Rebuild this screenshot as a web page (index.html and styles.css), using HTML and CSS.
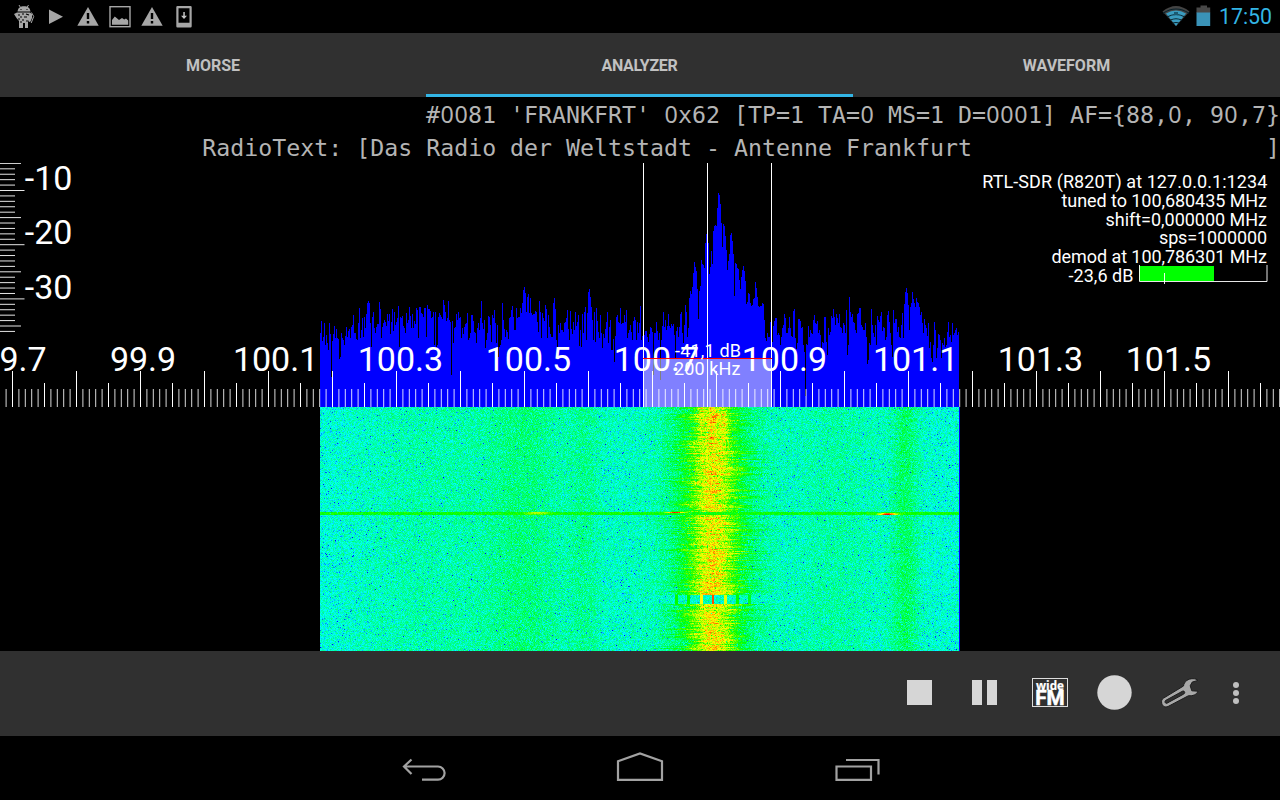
FILE: index.html
```html
<!DOCTYPE html>
<html lang="en">
<head>
<meta charset="utf-8">
<title>Analyzer</title>
<link rel="stylesheet" href="styles.css">
</head>
<body>
<div class="screen">
  <header class="status">
    <svg class="status-left" width="200" height="33" viewBox="0 0 200 33">
      <g fill="#a6a6a6">
        <path d="M17.500 11.500c.6-4 3-5.300 6.500-5.300s6 1.300 6.500 5.300zM14 14l3-1.500h13l2 1.500v4l-1.500 3.500-1.500.500-1-2v8h-3v-5h-2v5h-4v-7l-2.500-3z"/>
        <path d="M49 9.500v14.500l14-7.250z"/>
      </g>
      <path d="M19 5l1.500 2.500M28.500 5l-1.500 2.500M31.500 12.500l2.200 4-2.500 6.500" stroke="#a6a6a6" fill="none"/>
      <path d="M18 15h2M22 14h2M20 17h2M24 17h3M18 19h2M22 20h2M26 14l3 1M20.500 9.500h1M26.500 9.500h1M20 22h2M26 21h2" stroke="#000" stroke-width="1.200"/>
      <g id="warn">
        <path fill="#a6a6a6" d="M88 7l10.700 18.800H77.300z"/>
        <path stroke="#000" stroke-width="2.400" d="M88 13v6M88 21v2.500"/>
      </g>
      <use href="#warn" x="64"/>
      <rect x="110" y="6.700" width="20" height="20" fill="none" stroke="#a6a6a6" stroke-width="1.400"/>
      <path fill="#a6a6a6" d="M112 24.800v-4.800l2.800-3.500 4.200 3.500 3-2 2.200 1.500 1.800-1 2.200 2v4.300z"/>
      <path fill="#a6a6a6" fill-rule="evenodd" d="M177.500 6h13a1.200 1.200 0 0 1 1.200 1.200v19a1.200 1.200 0 0 1-1.200 1.200h-13a1.200 1.200 0 0 1-1.200-1.200v-19A1.200 1.200 0 0 1 177.500 6zM178.500 8.300v14.400h11V8.300z"/>
      <path fill="#c4c4c4" d="M183.300 12h1.500v3.800h2.200l-3 3.200-3-3.200h2.300z"/>
    </svg>
    <div class="status-right">
      <svg width="52" height="33" viewBox="1159.500 0 52 33">
        <path fill="#444" d="M1162 11.500q13.500-11 27 0l-13.500 14.500z"/>
        <path fill="#3a9cc0" d="M1165.500 13.500q10-6 20 0L1175.500 26z"/>
        <path fill="none" stroke="#08222c" stroke-width="1.100" d="M1162.500 13.300q13-8.500 26 0M1166.500 17q9-5 18 0M1169.500 20.300q6-3 12 0M1172 23.300q3.500-1.500 7 0"/>
        <path fill="#1b5a72" d="M1173.500 12h4v3.200h-4z"/>
        <path fill="#484848" d="M1196 7.500h4v-2h6.500v2h3.200V13H1196z"/>
        <path fill="#3a93b8" d="M1196 12.500h13.700V26H1196z"/>
      </svg>
      <span class="clock">17:50</span>
    </div>
  </header>

  <nav class="tabs">
    <div class="tab">MORSE</div>
    <div class="tab tab-active">ANALYZER</div>
    <div class="tab">WAVEFORM</div>
  </nav>

  <section class="rds">
    <div class="rds-line">#<b>0</b><b>0</b>81 'FRANKFRT' <b>0</b>x62 [TP=1 TA=<b>0</b> MS=1 D=<b>0</b><b>0</b><b>0</b>1] AF={88,<b>0</b>, 9<b>0</b>,7}</div>
    <div class="rds-line">RadioText: [Das Radio der Weltstadt - Antenne Frankfurt                     ]</div>
  </section>

  <svg class="spectrum" width="1280" height="244" viewBox="0 163 1280 244">
    <path id="trace" fill="#00f" shape-rendering="crispEdges"/>
    <rect x="643" y="359" width="129" height="48" fill="#fff" fill-opacity=".5"/>
    <g id="scale" stroke="#fff"></g>
    <g id="labels" class="big"></g>
    <path stroke="#fff" d="M643.500 163v244M707.500 163v244M771.500 163v244"/>
    <path stroke="#f00" d="M643 358.500h129"/>
    <g class="small">
      <text x="675" y="357" textLength="66">-41,1 dB</text>
      <text x="674" y="375" textLength="66.500">200 kHz</text>
      <g text-anchor="end">
        <text x="1267.300" y="187.700" textLength="285">RTL-SDR (R820T) at 127.0.0.1:1234</text>
        <text x="1267" y="206.700" textLength="205.500">tuned to 100,680435 MHz</text>
        <text x="1267" y="225.700" textLength="161.500">shift=0,000000 MHz</text>
        <text x="1267" y="244.200" textLength="108">sps=1000000</text>
        <text x="1267" y="262.800" textLength="215.500">demod at 100,786301 MHz</text>
        <text x="1133.500" y="281.500" textLength="65">-23,6 dB</text>
      </g>
    </g>
    <path fill="#0f0" d="M1139 266h75v15h-75z"/>
    <path fill="none" stroke="#fff" stroke-opacity=".9" d="M1139.500 265v16.500h127.500V265M1164.500 273v11"/>
  </svg>

  <canvas class="waterfall" id="waterfall" width="640" height="244"></canvas>

  <footer class="toolbar">
    <svg width="400" height="70" viewBox="880 660 400 70">
      <g fill="#d6d6d6">
        <path d="M907 680h25v25h-25zM972 680h10v25h-10zM987 680h10v25h-10z"/>
        <circle cx="1114.500" cy="692.500" r="17.200"/>
      </g>
      <rect x="1032.500" y="678.500" width="35" height="28" fill="none" stroke="#ddd"/>
      <text class="wide" x="1036" y="690" textLength="28" lengthAdjust="spacingAndGlyphs">wide</text>
      <text class="fm" x="1035.200" y="705" textLength="29.500" lengthAdjust="spacingAndGlyphs">FM</text>
      <path fill="#a8a8a8" fill-rule="evenodd" stroke="#1d1d1d" stroke-width="1" d="M1163.300 698.300l20.200-12.300c.5-4.500 4.800-7.500 9.500-7.300 2.200 0 3.800.600 4.900 1.700l-5.700 1.700-2 3.700 1.600 5 6.200.4c-1.300 3.400-5.300 5-9.500 4.500l-20.500 10.800c-3 1.200-5.600-.2-6.300-3.300-.400-2 0-3.800 1.600-4.900zM1165.500 700.500c-1 1-.5 3.400 1.500 2.700l16.800-9.200c1.800-1.300.700-3.500-1.300-2.800z"/>
      <g fill="#bfbfbf"><circle cx="1236" cy="685" r="3"/><circle cx="1236" cy="693" r="3"/><circle cx="1236" cy="701" r="3"/></g>
    </svg>
  </footer>

  <footer class="navbar">
    <svg width="1280" height="64" viewBox="0 736 1280 64" fill="none" stroke="#a2a2a2" stroke-width="2.200">
      <path d="M411.500 759.500l-7.500 7 7.500 7.500M404 766.500h34a6.600 6.600 0 0 1 0 13.200h-16"/>
      <path d="M618 779.800v-18.500l22-7.800 22 7.800v18.500z"/>
      <path d="M836.500 766.500h34.500v13.300h-34.500zM846 760h32.500v14.500"/>
    </svg>
  </footer>
</div>
<script src="analyzer.js"></script>
</body>
</html>
```
FILE: styles.css
```css
body {
  margin: 0;
  background: #000;
  overflow: hidden;
  font-family: Roboto, sans-serif;
}

.screen {
  display: flex;
  flex-direction: column;
  width: 1280px;
  height: 800px;
}

.screen svg {
  display: block;
}

.status {
  display: flex;
  justify-content: space-between;
  height: 33px;
}

.status-right {
  display: flex;
  align-items: center;
  gap: 7px;
  padding-right: 8px;
}

.clock {
  color: #33b5e5;
  font-size: 21.3px;
  line-height: 36px;
}

.tabs {
  display: grid;
  grid-template-columns: 426px 427px 427px;
  height: 64px;
  background: #303030;
}

.tab {
  box-sizing: border-box;
  height: 64px;
  color: #c1c1c1;
  font-size: 16px;
  font-weight: 700;
  line-height: 65px;
  text-align: center;
}

.tab-active {
  border-bottom: 3px solid #33b5e5;
  letter-spacing: -0.3px;
}

.rds {
  height: 66px;
  color: #b4b4b4;
  font-family: "DejaVu Sans Mono", monospace;
  font-size: 23.255px;
  text-align: right;
}

.rds-line {
  height: 33px;
  line-height: 35px;
  white-space: pre;
}

.rds-line b {
  display: inline-block;
  width: 14px;
  height: 33px;
  font-family: "Noto Sans", sans-serif;
  font-weight: 400;
  text-align: center;
  vertical-align: top;
}

.spectrum {
  fill: #fff;
}

.big {
  font-size: 34px;
}

.small {
  font-size: 18px;
}

.waterfall {
  display: block;
  width: 640px;
  height: 244px;
  margin-left: 320px;
}

.toolbar {
  display: flex;
  justify-content: flex-end;
  box-sizing: border-box;
  height: 85px;
  padding-top: 9px;
  background: #303030;
}

.wide,
.fm {
  fill: #fff;
  stroke: #fff;
  font-weight: 700;
}

.wide {
  font-family: "Open Sans", sans-serif;
  font-size: 12.500px;
  stroke-width: 0.2px;
}

.fm {
  font-size: 19.8px;
  stroke-width: 0.5px;
}

.navbar {
  height: 64px;
}
```
FILE: analyzer.js
```js
// Level readings, one per pixel column, in thirds of a pixel from the origin of each half.
const lower = [
220,183,243,230,190,255,225,250,270,190,222,352,243,222,198,235,207,233,237,298,290,218,235,240,255,228,202,230,213,208,
235,202,195,165,218,220,237,240,190,144,233,210,175,230,172,203,162,130,123,130,190,260,170,155,203,218,200,192,192,126,
147,235,200,190,180,185,197,163,182,163,222,187,148,213,157,195,185,175,138,262,172,175,168,198,203,220,160,190,180,142,
168,205,163,205,182,193,145,150,235,142,142,158,163,172,144,144,230,136,147,147,153,175,172,155,255,155,262,255,170,158,
165,172,178,120,135,155,182,175,123,180,187,345,183,250,203,200,162,180,155,175,172,235,205,222,200,193,190,160,240,235,
218,165,165,182,215,220,250,205,190,210,175,123,188,208,180,265,240,220,168,172,195,245,165,173,150,190,250,195,290,260,
255,240,130,180,208,230,210,215,237,175,172,150,138,170,210,210,145,173,172,170,145,160,130,90,81,98,157,110,102,160,
115,160,165,163,162,153,155,185,215,123,155,235,160,175,183,135,147,235,165,200,222,232,230,130,113,148,240,268,195,220,
190,210,210,215,188,185,175,150,208,240,153,207,222,185,210,155,198,185,165,258,210,260,163,218,157,142,240,160,95,87,
110,140,180,240,155,245,145,183,215,235,165,220,263,222,235,208,185,155,250,200,180,270,270,238,307,228,172,165,187,188,
143,192,190,190,165,187,150,235,218,210,195,215,240,182,170,180,240,185,220,190];
const upper = [
453,555,543,540,540,527,528,545,560,537,515,518,530,660,533,535,502,527,555,535,675,555,513,470,515,495,525,513,477,513,
520,508,513,508,540,610,528,515,545,515,478,472,533,565,510,450,470,545,518,430,408,418,395,353,321,335,348,402,492,408,
392,315,328,330,338,265,237,237,265,357,335,287,327,228,212,210,213,160,113,120,147,205,275,207,212,243,285,345,318,297,
239,234,258,297,422,323,328,340,342,375,402,365,345,333,348,378,447,440,413,417,443,453,450,433,430,380,399,427,452,455,
453,453,443,447,494,550,558,535,545,545,500,557,560,512,497,490,490,540,535,540,570,547,520,510,477,490,533,535,518,487,
518,543,545,468,462,550,582,565,493,491,497,520,517,570,590,722,568,570,513,545,525,535,537,495,480,503,508,498,533,525,
540,580,560,565,486,486,560,600,520,540,530,484,490,462,485,510,478,490,505,478,515,520,533,505,510,533,465,600,570,425,
470,487,478,500,505,525,535,477,475,460,460,510,515,525,525,503,545,627,615,565,570,462,510,535,545,510,570,483,495,500,
483,472,527,515,520,555,545,480,468,500,535,570,605,465,505,492,492,530,515,545,550,510,475,550,447,411,400,415,450,525,
455,445,411,432,443,455,430,440,445,455,480,472,505,535,492,510,520,543,505,580,562,610,620,570,502,525,610,580,537,540,
555,610,565,570,550,575,570,530,502,545,540,560,505,540,535,525,520,540,530,477];

const tops = lower.map(v => 260 + v / 3).concat(upper.map(v => 155 + v / 3));
let d = "M320 407";
tops.slice(0, 639).forEach((y, i) => { d += "V" + Math.round(y) + "h1"; });
document.getElementById("trace").setAttribute("d", d + "V407z");

const NS = "http://www.w3.org/2000/svg";
const scale = document.getElementById("scale");
const labels = document.getElementById("labels");

function tick(x1, y1, x2, y2, opacity) {
  const l = document.createElementNS(NS, "path");
  l.setAttribute("d", `M${x1} ${y1}L${x2} ${y2}`);
  l.setAttribute("stroke-opacity", opacity);
  scale.appendChild(l);
}

function label(x, y, text) {
  const t = document.createElementNS(NS, "text");
  t.setAttribute("x", x);
  t.setAttribute("y", y);
  t.textContent = text;
  labels.appendChild(t);
}

// Frequency ruler
for (let k = -1; k < 199; k++) {
  const x = 12.5 + 6.4 * k;
  const top = k % 10 === 0 ? 371 : k % 5 === 0 ? 383 : 389;
  tick(x.toFixed(2), top, x.toFixed(2), 407, k % 5 === 0 ? 1 : 0.85);
}
for (let i = 0; i < 10; i++) {
  const mhz = (99.7 + i * 0.2).toFixed(1);
  const lead = i === 0 ? 32.2 : i === 1 ? 30.6 : mhz.endsWith("1") ? 35.6 : 38.8;
  label(12.5 + 128 * i - lead, 371, mhz);
}

// Level ruler
for (let k = 0; k < 32; k++) {
  const y = (163.4 + 5.42 * k).toFixed(2);
  tick(0, y, k % 10 === 5 ? 24.5 : k % 5 === 0 ? 21 : 15, y, 0.9);
}
["-10", "-20", "-30"].forEach((t, i) => label(24.8, 190 + 54.4 * i, t));

// Waterfall history
let seed = 20417;
function rnd() {
  seed = (seed * 1664525 + 1013904223) >>> 0;
  return (seed + 0.5) / 4294967296;
}
const bell = (x, c, w) => Math.exp(-((x - c) * (x - c)) / (2 * w * w));
const ramp = [[0, 0, 255], [0, 255, 255], [0, 255, 0], [255, 255, 0], [255, 0, 0]];
function colour(v) {
  v = Math.max(0, Math.min(3.999, v));
  const i = Math.floor(v), f = v - i;
  return ramp[i].map((c, n) => c + (ramp[i + 1][n] - c) * f);
}

const pilotTones = [[676, 0.7], [688, 0.7], [701, 1.7], [712.5, 2.4], [725, 1.6], [737, 0.7], [749, 0.6]];
const ctx = document.getElementById("waterfall").getContext("2d");
const img = ctx.createImageData(640, 244);
for (let r = 0; r < 244; r++) {
  const y = 407 + r;
  const early = y < 440;
  const shift = (rnd() - 0.5) * 6;
  const left = (early ? 10 : 13) + Math.pow(rnd(), 3) * 16;
  const right = (early ? 10 : 13) + Math.pow(rnd(), 3) * 18;
  const gain = (early ? 0.72 : 0.95) + rnd() * 0.3;
  const drift = (rnd() - 0.5) * 8;
  const line = y >= 512 && y <= 514;
  const pilots = y >= 595 && y <= 603;
  let streak = 0;
  for (let c = 0; c < 640; c++) {
    const x = 320 + c;
    const noise = Math.log(-Math.log(rnd()));
    let v = 1.31 + 0.175 * noise + 0.1 * bell(x, 450, 60);
    v += 0.24 * bell(x, 525, 24) + 0.2 * bell(x, 584, 10) + 0.13 * bell(x, 835, 24);
    v += 0.4 * bell(x, 905 + drift, 9) - 0.06 * bell(x, 940, 22) - 0.08 * bell(x, 322, 30);
    if (line) {
      v = 2.06 + 0.11 * noise;
      v += y < 514 ? 0.7 * bell(x, 537, 8) : 0.25 * bell(x, 537, 10);
      v += y === 512 ? 2 * bell(x, 675, 6) : 2 * bell(x, 887, 6) * (y === 514 ? 1 : 0.8);
    } else if (pilots) {
      pilotTones.forEach(p => {
        if (Math.abs(x - p[0]) <= 1) v = 1.3 + p[1];
      });
    } else {
      streak = streak * 0.72 + (rnd() - 0.5) * 0.42;
      v += 0.68 * bell(x, 712, 28);
      v += gain * bell(x, 713 + shift, x < 713 + shift ? left : right);
      v += streak * 1.1 * bell(x, 713, 27);
      if (early) v += 0.4 * (bell(x, 700, 3) + bell(x, 712, 3) + bell(x, 724, 3));
    }
    if (c === 639) v = 0;
    const rgb = colour(v);
    const o = (r * 640 + c) * 4;
    img.data[o] = rgb[0];
    img.data[o + 1] = rgb[1];
    img.data[o + 2] = rgb[2];
    img.data[o + 3] = 255;
  }
}
ctx.putImageData(img, 0, 0);
```
